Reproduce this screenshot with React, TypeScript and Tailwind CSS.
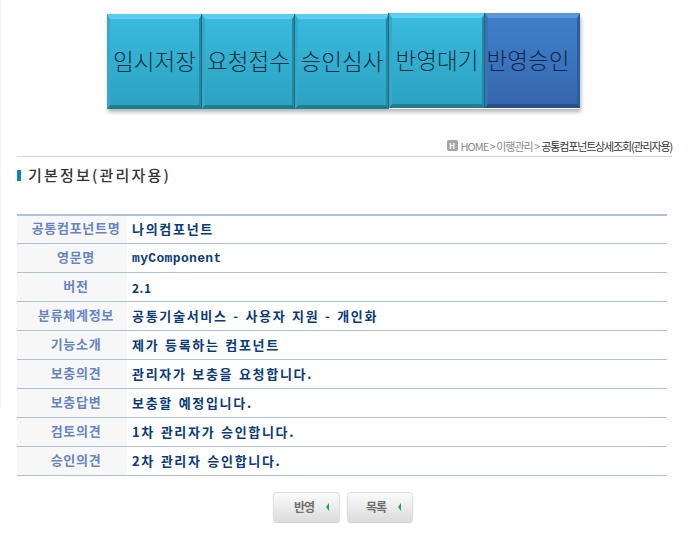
const rows: [string, string][] = [
  ["공통컴포넌트명", "나의컴포넌트"],
  ["영문명", "myComponent"],
  ["버전", "2.1"],
  ["분류체계정보", "공통기술서비스 - 사용자 지원 - 개인화"],
  ["기능소개", "제가 등록하는 컴포넌트"],
  ["보충의견", "관리자가 보충을 요청합니다."],
  ["보충답변", "보충할 예정입니다."],
  ["검토의견", "1차 관리자가 승인합니다."],
  ["승인의견", "2차 관리자 승인합니다."],
];

function Step({ label, w, blue, up, shift }: { label: string; w: string; blue?: boolean; up?: boolean; shift?: string }) {
  return (
    <div
      className={`${w} ${up ? "-mt-px" : ""} ${shift ?? "pb-[3px]"} h-[95px] flex items-center justify-center text-[22.5px] leading-none whitespace-nowrap font-light border-t-[5px] border-l-[3px] border-r-[3px] border-b-[4px] bg-clip-padding bg-gradient-to-b not-first:shadow-[-1px_0_0_#1b6a80] ${
        blue
          ? "from-[#3f7fcb] via-[#3b74bd] to-[#3567ad] text-[#10264d] border-t-[#5e97d8] border-l-[#3b72b5] border-r-[#2d5f9d] border-b-[#244f87]"
          : "from-[#38bade] via-[#32aecf] to-[#2ca2c2] text-[#0e2f42] border-t-[#5ccdea] border-l-[#34a9c8] border-r-[#2688a2] border-b-[#1f7c93]"
      }`}
    >
      {label}
    </div>
  );
}

function Btn({ label, cls }: { label: string; cls: string }) {
  return (
    <div className={`${cls} h-[30px] rounded-[4px] border border-[#dedede] bg-gradient-to-b from-[#fbfbfb] via-[#ececec] to-[#dcdcdc] shadow-[0_1px_1px_#ccc] flex items-center gap-[12px] text-[#6f6f6f] text-[12px] tracking-[-1px] font-bold`}>
      <span>{label}</span>
      <svg width="3" height="8" viewBox="0 0 3 8"><path d="M3 0V8L0 4Z" fill="#12a84f" /></svg>
    </div>
  );
}

export default function App() {
  return (
    <div className="relative w-[693px] h-[535px] bg-white overflow-hidden font-['Noto_Sans_CJK_KR','DejaVu_Sans',sans-serif]">
      <div className="absolute left-0 top-0 w-px h-[409px] bg-[#f4f4f4]" />
      <div className="flex pl-[107px] pt-[14px]">
        <div className="flex shadow-[1px_3px_4px_rgba(0,0,0,0.3)]">
          <Step label="임시저장" w="w-[95px]" />
          <Step label="요청접수" w="w-[93px]" />
          <Step label="승인심사" w="w-[94px]" />
          <Step label="반영대기" w="w-[96px]" up />
          <Step label="반영승인" w="w-[95px]" blue up shift="pr-[9px] pb-[3px]" />
        </div>
      </div>

      <div className="ml-[17px] w-[655px] mt-[28px] h-[20px] pt-[3px] border-b border-[#d6d6d6] flex items-start justify-end text-[11px] leading-[13px] tracking-[-1px] text-[#8a8a8a] whitespace-nowrap">
        <span className="w-[11px] h-[11px] bg-[#a5a5a5] rounded-[2px] text-white text-[8px] leading-[11px] font-bold text-center mr-[3px] tracking-normal">H</span>
        <span>HOME &gt; 이행관리 &gt; </span>
        <span className="text-[#333] ml-[2px] tracking-[-1.15px]">공통컴포넌트상세조회(관리자용)</span>
      </div>

      <div className="ml-[17px] mt-[9px] flex items-center h-[18px] text-[15px] font-medium text-[#333] tracking-[2.2px]">
        <span className="w-[4px] h-[11px] bg-[#0a85c4] mr-[7px]" />
        기본정보(관리자용)
      </div>

      <div className="ml-[17px] w-[650px] mt-[30px] border-t-2 border-[#adc2da]">
        {rows.map(([k, v], i) => (
          <div key={k} className="flex h-[29px] first:h-[28px] border-b border-[#adc2da]">
            <div className={`w-[110px] pl-[8px] bg-[#f7f7f7] text-[#6585c5] text-center text-[13px] font-semibold tracking-[0.7px] ${i === 0 ? "leading-[24px]" : "leading-[25px]"}`}>{k}</div>
            {i === 1 ? (
              <div className="pl-[5px] text-[#0a3a78] font-['Liberation_Mono',monospace] font-bold text-[13px] tracking-[0.35px] leading-[29px]">{v}</div>
            ) : i === 2 ? (
              <div className="pl-[5px] text-[#0a3a78] font-bold text-[12px] tracking-[0.5px] leading-[29px]">{v}</div>
            ) : (
              <div className={`pl-[5px] text-[#0a3a78] font-bold text-[13px] tracking-[1.7px] [word-spacing:1px] ${i === 0 ? "leading-[26px]" : "leading-[28px]"}`}>{v}</div>
            )}
          </div>
        ))}
      </div>

      <div className="flex gap-[7px] mt-[16px] pl-[273px]">
        <Btn label="반영" cls="w-[67px] pl-[20px]" />
        <Btn label="목록" cls="w-[66px] pl-[18px]" />
      </div>
    </div>
  );
}
